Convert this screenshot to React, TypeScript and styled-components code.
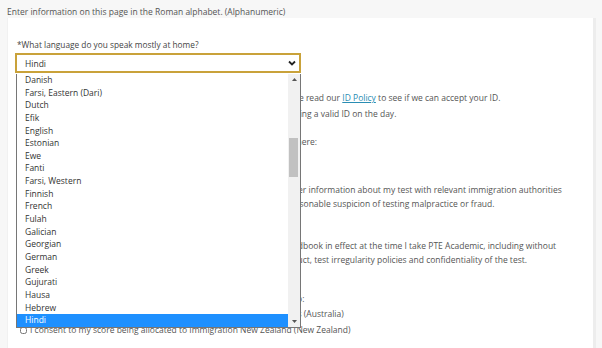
import styled, { createGlobalStyle } from "styled-components";

const GlobalStyle = createGlobalStyle`
  body {
    margin: 0;
    background: #f7f7f7;
    font-family: "Open Sans", "Noto Sans", sans-serif;
    color: #555;
  }
`;

const Page = styled.div`
  width: 602px;
  height: 348px;
  overflow: hidden;
`;

const Intro = styled.div`
  font-size: 8.5px;
  line-height: 18px;
  padding: 3px 7px 0;
  height: 15px;
`;

const Card = styled.div`
  margin-left: 7px;
  width: 589px;
  height: 340px;
  background: #fff;
  border-right: 3px solid #ededed;
  border-left: 1px solid #f1f1f1;
  padding: 21px 0 0 9px;
  box-sizing: border-box;
`;

const Label = styled.div`
  font-size: 8.3px;
  line-height: 12px;
  color: #444;
`;

const SelectWrap = styled.div`
  position: relative;
  width: 286px;
  margin-left: -2px;
  margin-top: 2px;
`;

const SelectBox = styled.div`
  height: 20px;
  box-sizing: border-box;
  border: 2px solid #c9a23a;
  display: flex;
  align-items: center;
  justify-content: space-between;
  padding: 0 3px 0 8px;
  font-size: 8.5px;
  color: #333;
`;

const Dropdown = styled.div`
  position: absolute;
  top: 21px;
  left: 1px;
  width: 285px;
  height: 254px;
  box-sizing: border-box;
  background: #fff;
  border: 1px solid #767676;
  border-top: none;
  display: flex;
  z-index: 2;
`;

const Options = styled.ul`
  flex: 1;
  margin: 0;
  padding: 0;
  list-style: none;
`;

const Option = styled.li<{ $selected?: boolean }>`
  height: 12.65px;
  line-height: 12.65px;
  padding-left: 8px;
  font-size: 8.5px;
  color: ${(p) => (p.$selected ? "#fff" : "#333")};
  background: ${(p) => (p.$selected ? "#1e90ff" : "transparent")};
`;

const Scrollbar = styled.div`
  width: 12px;
  background: #f1f1f1;
  position: relative;
  display: flex;
  flex-direction: column;
  justify-content: space-between;
  align-items: center;
  padding: 4px 0 4px;
  box-sizing: border-box;
`;

const Thumb = styled.div`
  position: absolute;
  left: 1px;
  right: 2px;
  top: 64px;
  height: 39px;
  background: #c1c1c1;
`;

const Body = styled.div`
  font-size: 8.5px;
  line-height: 14px;
  color: #555;
  margin-top: 18px;
`;

const Para = styled.p<{ $gap: number }>`
  margin: ${(p) => p.$gap}px 0 0;
  white-space: nowrap;
`;

const Link = styled.a`
  color: #2a8db3;
  text-decoration: underline;
`;

const Check = styled.label`
  display: flex;
  align-items: center;
  gap: 3px;
  height: 16px;
  margin-left: 3px;
  white-space: nowrap;
  input {
    width: 7px;
    height: 7px;
    margin: 0;
  }
`;

const languages = [
  "Danish",
  "Farsi, Eastern (Dari)",
  "Dutch",
  "Efik",
  "English",
  "Estonian",
  "Ewe",
  "Fanti",
  "Farsi, Western",
  "Finnish",
  "French",
  "Fulah",
  "Galician",
  "Georgian",
  "German",
  "Greek",
  "Gujurati",
  "Hausa",
  "Hebrew",
  "Hindi",
];

const App = () => {
  return (
    <Page>
      <GlobalStyle />
      <Intro>Enter information on this page in the Roman alphabet. (Alphanumeric)</Intro>
      <Card>
        <Label>*What language do you speak mostly at home?</Label>
        <SelectWrap>
          <SelectBox>
            <span>Hindi</span>
            <svg width="8" height="6" viewBox="0 0 8 6">
              <path d="M1 1.5 L4 4.5 L7 1.5" stroke="#222" strokeWidth="1.8" fill="none" />
            </svg>
          </SelectBox>
          <Dropdown>
            <Options>
              {languages.map((l) => (
                <Option key={l} $selected={l === "Hindi"}>
                  {l}
                </Option>
              ))}
            </Options>
            <Scrollbar>
              <svg width="5" height="3" viewBox="0 0 5 3">
                <path d="M0 3 L2.5 0 L5 3 Z" fill="#555" />
              </svg>
              <Thumb />
              <svg width="5" height="3" viewBox="0 0 5 3">
                <path d="M0 0 L2.5 3 L5 0 Z" fill="#555" />
              </svg>
            </Scrollbar>
          </Dropdown>
        </SelectWrap>
        <Body>
          <Para $gap={0}>
            I confirm I have read the ID requirements for my local test centre. Please read our <Link>ID Policy</Link> to
            see if we can accept your ID.
          </Para>
          <Para $gap={2}>
            I understand that I will not be admitted to a test room unless I am bringing a valid ID on the day.
          </Para>
          <Para $gap={14}>Please tell us where you first heard about PTE Academic by selecting it here:</Para>
          <Para $gap={34}>
            I understand and agree that Pearson may share my test scores and other information about my test with relevant
            immigration authorities
            <br />
            for the purpose of verifying my identity or in a case where there is a reasonable suspicion of testing
            malpractice or fraud.
          </Para>
          <Para $gap={28}>
            I have read and agree to the terms of the PTE Academic Test Taker Handbook in effect at the time I take PTE
            Academic, including without
            <br />
            limitation the policies on identification, re-scheduling, the rules of conduct, test irregularity policies and
            confidentiality of the test.
          </Para>
          <Para $gap={25}>Please select the immigration authorities you want to send the scores to:</Para>
          <Check>
            <input type="checkbox" />
            I consent to my score being allocated to Department of Home Affairs (Australia)
          </Check>
          <Check>
            <input type="checkbox" />
            I consent to my score being allocated to Immigration New Zealand (New Zealand)
          </Check>
        </Body>
      </Card>
    </Page>
  );
};

export default App;
